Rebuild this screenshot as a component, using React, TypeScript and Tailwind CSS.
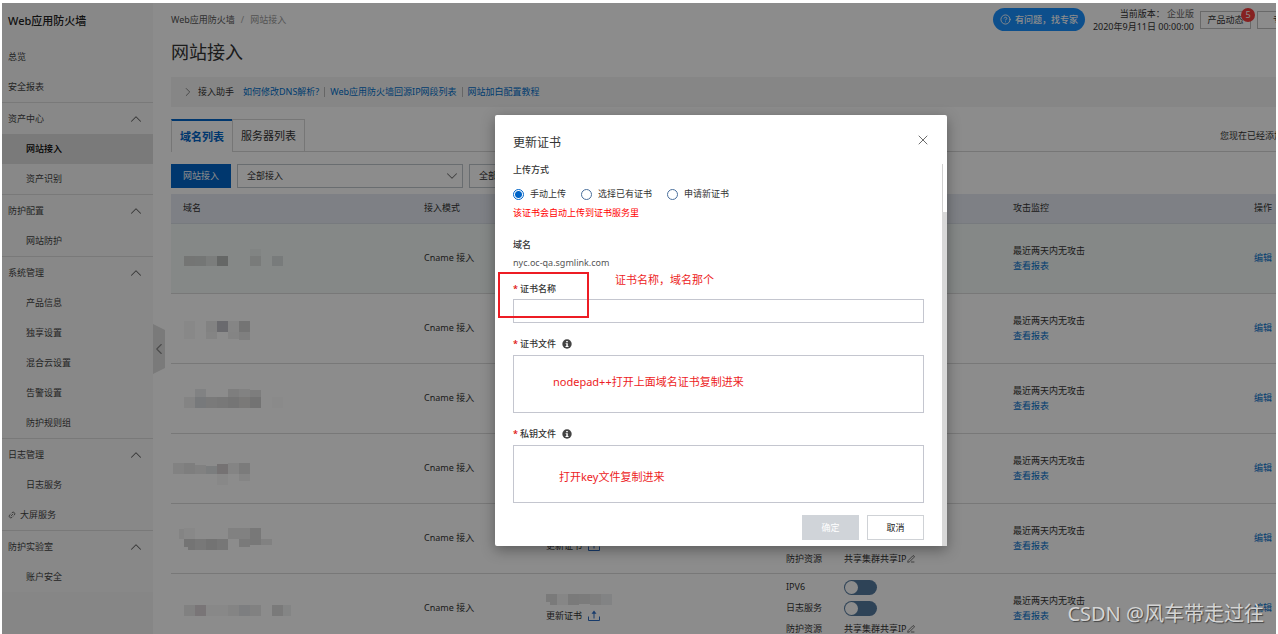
import { ChevronDown, ChevronLeft, ChevronRight, ChevronUp, CircleHelp, Link2, PenLine, X } from "lucide-react";

type Block = [x: number, y: number, w: number, h: number, opacity: number, tint?: string];

const topLinks = ["总览", "安全报表"];

const groups = [
  { title: "资产中心", items: ["网站接入", "资产识别"] },
  { title: "防护配置", items: ["网站防护"] },
  { title: "系统管理", items: ["产品信息", "独享设置", "混合云设置", "告警设置", "防护规则组"] },
  { title: "日志管理", items: ["日志服务"], external: "大屏服务" },
  { title: "防护实验室", items: ["账户安全"] }
];

const helpLinks = ["如何修改DNS解析?", "Web应用防火墙回源IP网段列表", "网站加白配置教程"];

// masked domain names, one list of blocks per table row
const maskedDomains: Block[][] = [
  [
    [13, 19, 11, 10, 0.14, "#1a0008"], [24, 19, 11, 10, 0.13], [35, 19, 11, 10, 0.08], [46, 19, 11, 10, 0.24],
    [79, 12, 11, 7, 0.03], [79, 19, 11, 10, 0.09], [101, 19, 11, 10, 0.1, "#001a26"]
  ],
  [
    [13, 14, 11, 18, 0.03], [35, 14, 11, 11, 0.07], [46, 14, 11, 11, 0.24, "#00001f"], [57, 14, 11, 11, 0.05],
    [68, 14, 11, 11, 0.17], [35, 25, 11, 7, 0.06], [57, 25, 11, 7, 0.06], [68, 25, 11, 8, 0.09]
  ],
  [
    [24, 12, 11, 8, 0.08, "#001a26"], [57, 12, 11, 8, 0.1], [68, 12, 11, 8, 0.07], [79, 13, 11, 7, 0.11],
    [13, 20, 11, 11, 0.06], [24, 20, 11, 11, 0.15, "#001a33"], [35, 20, 11, 11, 0.13], [46, 20, 11, 11, 0.14],
    [57, 20, 11, 11, 0.16], [68, 20, 11, 11, 0.14, "#1a0d00"], [79, 20, 11, 11, 0.18], [101, 20, 11, 11, 0.01]
  ],
  [
    [2, 16, 11, 11, 0.07], [13, 16, 11, 11, 0.1], [24, 18, 11, 9, 0.08], [35, 19, 11, 8, 0.12, "#001a26"],
    [46, 17, 11, 10, 0.19, "#260010"], [57, 16, 11, 11, 0.06], [68, 16, 11, 11, 0.12], [46, 27, 11, 11, 0.03],
    [68, 27, 11, 7, 0.05]
  ],
  [
    [8, 12, 5, 10, 0.06], [13, 11, 11, 11, 0.03], [57, 11, 11, 11, 0.08], [68, 11, 11, 11, 0.08],
    [79, 11, 11, 11, 0.14], [13, 22, 11, 8, 0.17], [17, 30, 7, 3, 0.17], [24, 22, 11, 11, 0.14],
    [35, 22, 11, 11, 0.18], [46, 22, 11, 11, 0.15], [68, 22, 11, 8, 0.13], [79, 22, 11, 6, 0.14], [90, 22, 11, 6, 0.08]
  ],
  [
    [13, 18, 11, 11, 0.08], [24, 18, 11, 11, 0.16, "#260010"], [35, 18, 11, 11, 0.03], [46, 18, 11, 11, 0.03],
    [57, 18, 11, 11, 0.06], [68, 18, 11, 11, 0.11, "#001a33"], [79, 18, 11, 11, 0.08], [101, 18, 11, 11, 0.13],
    [112, 18, 8, 11, 0.06, "#001a33"]
  ]
];

const maskedCert: Block[] = [
  [0, 0, 11, 8, 0.13], [4, 8, 7, 3, 0.13], [11, 0, 11, 11, 0.04], [22, 0, 11, 11, 0.13],
  [33, 0, 11, 10, 0.12], [44, 0, 11, 11, 0.1], [55, 0, 11, 11, 0.07, "#001a33"]
];

const Mask = ({ blocks, width, height }: { blocks: Block[]; width: number; height: number }) => (
  <svg width={width} height={height} className="block" aria-hidden="true">
    {blocks.map(([x, y, w, h, opacity, tint]) => (
      <rect key={`${x}-${y}`} x={x} y={y} width={w} height={h} fill={tint ?? "#000"} fillOpacity={opacity} />
    ))}
  </svg>
);

const UploadIcon = () => (
  <svg width="12" height="12" viewBox="0 0 12 12" fill="none" stroke="#2b6cc4" aria-hidden="true">
    <path d="M.5 6.500v4h11v-4" />
    <path d="M6 8.500V2" />
    <path d="M3.500 3.800 6 .600l2.500 3.200z" fill="#2b6cc4" stroke="none" />
  </svg>
);

const InfoIcon = () => (
  <svg width="10" height="10" viewBox="0 0 10 10" className="ml-1" aria-hidden="true">
    <circle cx="5" cy="5" r="4.700" fill="#444" />
    <path d="M4.200 2h1.600v1.300H4.200zM3.600 4.200h2.200v2.900h.7V8H3.500v-.9h.8v-2h-.7z" fill="#fff" />
  </svg>
);

const Sidebar = () => (
  <nav className="relative w-[151px] shrink-0 bg-[#f5f5f5] text-[#444]">
    <div className="bg-[#f8f8f8]">
      <h2 className="mb-[3px] flex h-9 items-center pl-1.5 text-[11px] font-medium text-[#222]">Web应用防火墙</h2>
      {topLinks.map((link) => (
        <a key={link} href="#" className="flex h-[30px] items-center pl-1.5">
          {link}
        </a>
      ))}
      {groups.map((group) => (
        <div key={group.title} className="border-t border-[#dcdcdc]">
          <button type="button" className="flex h-[31px] w-full items-center justify-between pr-2 pl-1.5">
            {group.title}
            <ChevronUp size={18} strokeWidth={1.4} className="text-[#666]" />
          </button>
          {group.items.map((item) => (
            <a
              key={item}
              href="#"
              className={
                item === "网站接入"
                  ? "flex h-[30px] items-center bg-[#dfdfdf] pl-6 font-medium text-black"
                  : "flex h-[30px] items-center pl-6"
              }
            >
              {item}
            </a>
          ))}
          {group.external && (
            <a href="#" className="flex h-[30px] items-center gap-1 pl-1.5">
              <Link2 size={8} className="-rotate-45" />
              {group.external}
            </a>
          )}
        </div>
      ))}
    </div>
    <button type="button" aria-label="收起菜单" className="absolute top-[321px] left-full h-[50px] w-3 text-[#888]">
      <svg width="12" height="50" className="absolute inset-0" aria-hidden="true">
        <path d="M0 0l12 6v38L0 50z" fill="#dedede" />
      </svg>
      <ChevronLeft size={18} strokeWidth={1.5} className="absolute top-4 -left-[3px]" />
    </button>
  </nav>
);

const PageHeader = () => (
  <header className="flex justify-between">
    <div>
      <div className="flex h-[34px] items-center gap-1.5 text-[#555]">
        <a href="#">Web应用防火墙</a>
        <span className="text-[#aaa]">/</span>
        <span className="text-[#999]">网站接入</span>
      </div>
      <h1 className="text-[18px] leading-[30px] text-[#333]">网站接入</h1>
    </div>
    <div className="flex items-start">
      <button type="button" className="mt-[5px] flex h-[23px] items-center gap-1 rounded-full bg-[#1890ff] px-[7px] font-medium text-white">
        <CircleHelp size={11} />
        有问题，找专家
      </button>
      <p className="mt-1 ml-2 text-right leading-[13px] text-[#333]">
        当前版本： <span className="text-[#666]">企业版</span>
        <br />
        2020年9月11日 00:00:00
      </p>
      <button type="button" className="relative mt-2 ml-1.5 h-[18px] w-[51px] border border-[#c0c0c0] text-[#333]">
        产品动态
        <span className="absolute -top-1 -right-[5px] flex size-3.5 items-center justify-center rounded-full bg-[#f43c3c] text-white">
          5
        </span>
      </button>
      <button type="button" className="mt-2 ml-1.5 h-[18px] w-[19px] overflow-hidden border border-r-0 border-[#c0c0c0] pl-[15px] whitespace-nowrap text-[#333]">
        专家
      </button>
    </div>
  </header>
);

const Filters = () => (
  <div className="mt-3 flex h-6 gap-1.5">
    <button type="button" className="w-[60px] bg-[#0064c8] text-white">
      网站接入
    </button>
    <div className="relative w-[226px]">
      <select aria-label="接入模式" className="h-full w-full appearance-none border border-[#c0c6cc] pl-[9px] text-[#333]">
        <option>全部接入</option>
      </select>
      <ChevronDown size={18} strokeWidth={1.4} className="pointer-events-none absolute top-[3px] right-0.5 text-[#777]" />
    </div>
    <div className="relative w-[226px]">
      <select aria-label="状态" className="h-full w-full appearance-none border border-[#c0c6cc] pl-[9px] text-[#333]">
        <option>全部</option>
      </select>
    </div>
  </div>
);

const Toggle = ({ label }: { label: string }) => (
  <button
    type="button"
    role="switch"
    aria-checked="false"
    aria-label={label}
    className="flex h-[15px] w-[33px] items-center rounded-full bg-[#557a9f] p-px"
  >
    <span className="size-[13px] rounded-full bg-white" />
  </button>
);

const DomainTable = () => (
  <table className="mt-1.5 w-full table-fixed text-left text-[#333]">
    <colgroup>
      <col className="w-[241px]" />
      <col className="w-[122px]" />
      <col className="w-[240px]" />
      <col className="w-[227px]" />
      <col />
      <col className="w-[34px]" />
    </colgroup>
    <thead className="bg-[#e6eaf2]">
      <tr className="h-[29px] border-b border-[#d9dee6]">
        {["域名", "接入模式", "证书状态", "快捷操作", "攻击监控", "操作"].map((name) => (
          <th key={name} className="pl-3 font-normal whitespace-nowrap">
            {name}
          </th>
        ))}
      </tr>
    </thead>
    <tbody>
      {maskedDomains.map((blocks, i) => (
        <tr key={i} className="h-[70px] border-b border-[#dadada] first:bg-[#f3f8f6]">
          <td className="pb-0.5">
            <Mask blocks={blocks} width={130} height={40} />
          </td>
          <td className="pl-3">Cname 接入</td>
          <td className="pl-3">
            <Mask blocks={maskedCert} width={66} height={11} />
            <div className="mt-1 flex items-center gap-1.5">
              更新证书
              <UploadIcon />
            </div>
          </td>
          <td className="pl-3">
            <div className="grid grid-cols-[58px_1fr] auto-rows-[21px] items-center">
              <span>IPV6</span>
              <Toggle label="IPV6" />
              <span>日志服务</span>
              <Toggle label="日志服务" />
              <span>防护资源</span>
              <span className="flex items-center">
                共享集群共享IP
                <PenLine size={8} />
              </span>
            </div>
          </td>
          <td className="pl-3 leading-[15px]">
            最近两天内无攻击
            <br />
            <a href="#" className="text-[#0070cc]">
              查看报表
            </a>
          </td>
          <td className="pl-3 whitespace-nowrap">
            <a href="#" className="text-[#0070cc]">
              编辑
            </a>
          </td>
        </tr>
      ))}
    </tbody>
  </table>
);

const FileField = ({ id, label, note, indent }: { id: string; label: string; note: string; indent: string }) => (
  <div className="mt-3">
    <label htmlFor={id} className="flex h-[18px] items-center gap-0.5 font-medium">
      <span className="text-[#d00]">*</span>
      {label}
      <InfoIcon />
    </label>
    <div className="relative mt-0.5">
      <textarea id={id} className="block h-[58px] w-full resize-none border border-[#c4c6cf]" />
      <span className={`pointer-events-none absolute text-[11px] leading-4 text-[#ed1c24] ${indent}`}>{note}</span>
    </div>
  </div>
);

const CertDialog = () => (
  <div
    role="dialog"
    aria-label="更新证书"
    className="absolute top-[115px] left-[495px] w-[452px] rounded-xs bg-white pt-4 pr-[23px] pb-1.5 pl-[18px] text-[#333] shadow-[0_4px_14px_rgba(0,0,0,0.35)]"
  >
    <div className="flex h-6 items-center justify-between">
      <h2 className="text-[12px]">更新证书</h2>
      <button type="button" aria-label="关闭" className="-mt-1.5 -mr-[7px] text-[#555]">
        <X size={16} strokeWidth={1.3} />
      </button>
    </div>
    <form>
      <fieldset>
        <legend className="pt-1.5 leading-[18px] font-medium">上传方式</legend>
        <div className="flex h-[27px] items-center gap-[15px] pt-[3px]">
          {["手动上传", "选择已有证书", "申请新证书"].map((name, i) => (
            <label key={name} className="flex items-center gap-1.5">
              <input
                type="radio"
                name="source"
                defaultChecked={i === 0}
                className="size-[11px] appearance-none rounded-full border border-[#4a6f9c] checked:border-[#0064c8] checked:bg-[radial-gradient(circle,#0064c8_3px,#fff_4px)]"
              />
              {name}
            </label>
          ))}
        </div>
      </fieldset>
      <p className="leading-[14px] text-[#f00]">该证书会自动上传到证书服务里</p>
      <p className="mt-4 leading-[18px] font-medium">域名</p>
      <p className="leading-[18px] text-[#555]">nyc.oc-qa.sgmlink.com</p>
      <div className="relative mt-2">
        <label htmlFor="cert-name" className="flex h-[18px] items-center gap-0.5 font-medium">
          <span className="text-[#d00]">*</span>
          证书名称
        </label>
        <input id="cert-name" className="mt-px block h-6 w-full border border-[#c4c6cf]" />
        <span className="pointer-events-none absolute -top-2 -left-[15px] h-[46px] w-[91px] border-2 border-[#ed1c24]" />
        <span className="pointer-events-none absolute -top-2 left-[102px] text-[11px] leading-4 text-[#ed1c24]">
          证书名称，域名那个
        </span>
      </div>
      <FileField id="cert-file" label="证书文件" note="nodepad++打开上面域名证书复制进来" indent="top-[19px] left-10" />
      <FileField id="key-file" label="私钥文件" note="打开key文件复制进来" indent="top-6 left-[46px]" />
      <div className="mt-3 flex justify-end gap-2">
        <button type="submit" disabled className="h-[25px] w-[57px] bg-[#d0d4d9] text-white">
          确定
        </button>
        <button type="button" className="h-[25px] w-[57px] border border-[#cfd2d6] text-[#222]">
          取消
        </button>
      </div>
    </form>
    <div className="absolute top-[49px] right-0 bottom-0 w-[5px] border-l border-[#d0d0d0]">
      <div className="mt-12 -ml-px h-[calc(100%-48px)] bg-[#d8d8d8]" />
    </div>
  </div>
);

export default function App() {
  return (
    <div className="relative h-screen overflow-hidden bg-white px-0.5 pt-[3px] font-['Noto_Sans','Noto_Sans_CJK_SC',sans-serif] text-[9px] leading-[14px]">
      <div className="relative flex h-full overflow-hidden">
        <Sidebar />
        <main className="min-w-0 flex-1 pl-[18px]">
          <PageHeader />
          <div className="mt-2.5 flex h-[30px] items-center bg-[#f4f4f4] pl-2.5">
            <ChevronRight size={14} strokeWidth={1.5} className="text-[#777]" />
            <span className="ml-[3px] text-[#333]">接入助手</span>
            <div className="ml-[9px] flex divide-x divide-[#bbb] text-[#0070cc]">
              {helpLinks.map((link) => (
                <a key={link} href="#" className="px-[5px] leading-[10px] first:pl-0">
                  {link}
                </a>
              ))}
            </div>
          </div>
          <div className="mt-3 flex h-[33px] border-b border-[#d8d8d8] text-[11px]">
            <button type="button" className="-mb-px w-[61px] border-t-2 border-l border-t-[#0064c8] border-l-[#d8d8d8] bg-white font-bold text-[#0064c8]">
              域名列表
            </button>
            <button type="button" className="w-[73px] border border-b-0 border-[#d8d8d8] text-[#333]">
              服务器列表
            </button>
            <span className="ml-auto w-14 overflow-hidden text-[9px] leading-[33px] whitespace-nowrap text-[#333]">
              您现在已经添加
            </span>
          </div>
          <Filters />
          <DomainTable />
        </main>
        <div className="absolute inset-0 bg-black/45" />
      </div>
      <CertDialog />
      <div className="pointer-events-none absolute right-3.5 bottom-1 text-[20px] leading-8 text-[#d4d4d4] [text-shadow:1px_1px_1px_#444]">
        CSDN @风车带走过往
      </div>
    </div>
  );
}
